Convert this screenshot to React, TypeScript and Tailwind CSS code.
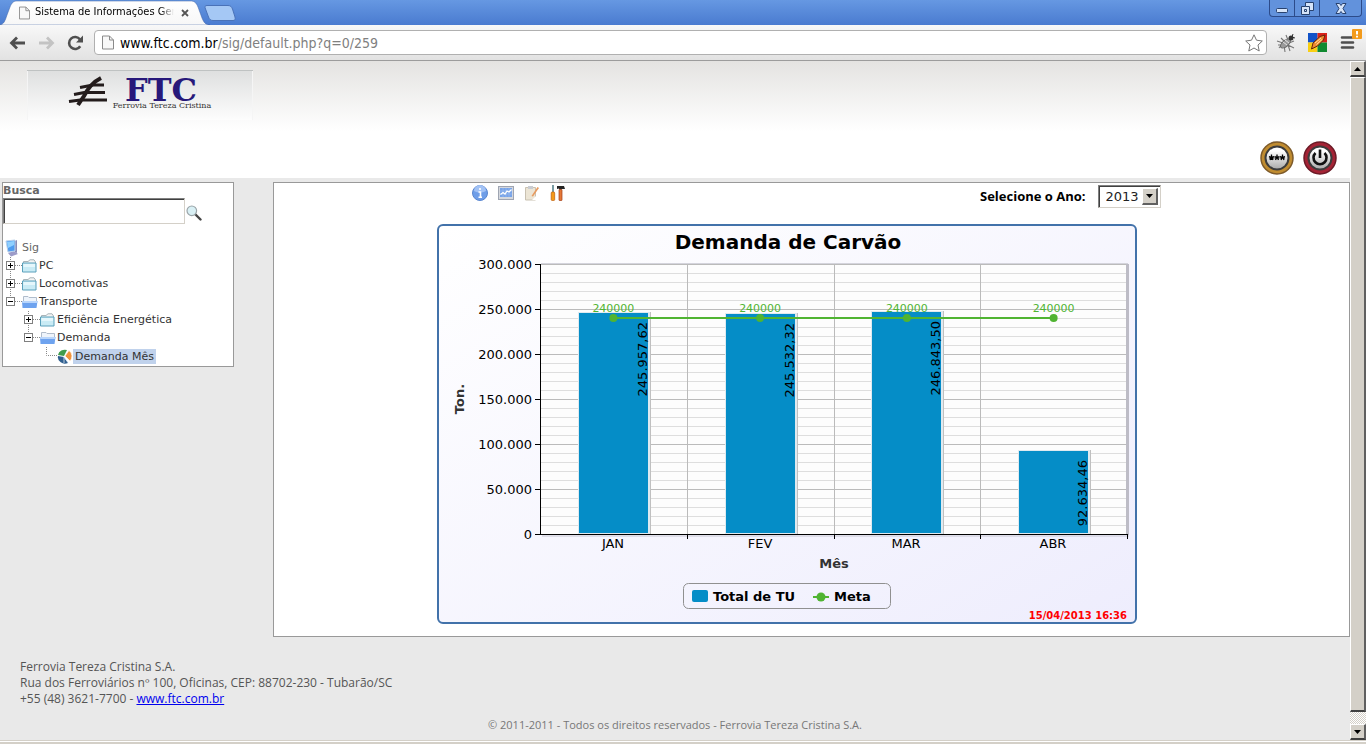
import React from "react";

const categories = [
  { name: "JAN", value: 245957.62, label: "245.957,62" },
  { name: "FEV", value: 245532.32, label: "245.532,32" },
  { name: "MAR", value: 246843.5, label: "246.843,50" },
  { name: "ABR", value: 92634.46, label: "92.634,46" },
];

const plot = { left: 103, right: 690, top: 40, bottom: 310, max: 300000 };
const yOf = (v: number) => plot.bottom - (v / plot.max) * (plot.bottom - plot.top);
const slot = (plot.right - plot.left) / categories.length;
const yTicks = [
  { value: 0, label: "0" },
  { value: 50000, label: "50.000" },
  { value: 100000, label: "100.000" },
  { value: 150000, label: "150.000" },
  { value: 200000, label: "200.000" },
  { value: 250000, label: "250.000" },
  { value: 300000, label: "300.000" },
];

function PageIcon({ className }: { className: string }) {
  return (
    <svg viewBox="0 0 12 14" className={className} aria-hidden="true">
      <path d="M.5 .5H7.5L11.5 4.5V13.5H.5Z" fill="#f8f8f8" stroke="#8a8a8a" />
      <path d="M7.5 .5V4.5H11.5" fill="none" stroke="#8a8a8a" />
    </svg>
  );
}

function TitleBar() {
  return (
    <div className="flex h-[25px] items-start bg-gradient-to-b from-[#6698e2] to-[#4a7bd0]">
      <div className="relative h-[25px] w-[210px] shrink-0">
        <svg viewBox="0 0 210 25" className="absolute inset-0 h-full w-full" aria-hidden="true">
          <defs>
            <linearGradient id="tab" x1="0" y1="0" x2="0" y2="1">
              <stop offset="0" stopColor="#ffffff" />
              <stop offset="1" stopColor="#f7f7f7" />
            </linearGradient>
          </defs>
          <path d="M0 25C4 24 5 21 7 15L10 7C12 2 14 1 17 1H190C194 1 196 2 198 7L202 18C204 23 206 25 210 25Z" fill="url(#tab)" stroke="#3d62a5" strokeOpacity=".5" />
        </svg>
        <div className="relative flex h-[25px] items-center pl-[19px]">
          <PageIcon className="h-[14px] w-[11px]" />
          <span className="ml-[5px] w-[139px] overflow-hidden whitespace-nowrap bg-gradient-to-r from-black from-90% to-transparent bg-clip-text font-['DejaVu_Sans_Condensed','DejaVu_Sans',sans-serif] text-[11px] text-transparent">
            Sistema de Informações Gere
          </span>
          <button aria-label="Fechar aba" className="ml-[7px]">
            <svg viewBox="0 0 8 8" className="size-2">
              <path d="M1 1L7 7M7 1L1 7" stroke="#555" strokeWidth="1.8" />
            </svg>
          </button>
        </div>
      </div>
      <button aria-label="Nova aba" className="-ml-[6px] mt-[5px]">
        <svg viewBox="0 0 32 16" className="h-4 w-8">
          <path d="M3 .5H24C27 .5 27.500 2 28.500 4L31 12C31.500 14.500 31 15.500 29 15.500H9C6 15.500 5.500 14 4.500 12L1.500 4C.5 1.500 1 .5 3 .5Z" fill="#a5c8f5" stroke="#4a72b8" />
        </svg>
      </button>
      <div className="ml-auto mr-1 flex h-[17px] rounded-b border border-t-0 border-[#2c4b8a] bg-[#6292dc]">
        <button aria-label="Minimizar" className="flex w-[25px] items-end justify-center border-r border-[#2c4b8a] pb-[3px]">
          <svg viewBox="0 0 12 5" className="h-[5px] w-3"><rect x=".5" y=".5" width="11" height="4" rx="1" fill="#d6e4f9" stroke="#28426f" /></svg>
        </button>
        <button aria-label="Restaurar" className="flex w-[25px] items-center justify-center border-r border-[#2c4b8a]">
          <svg viewBox="0 0 13 13" className="size-[13px]">
            <path d="M4.500 .5H12.500V8.500H8.500V12.500H.5V4.500H4.500Z" fill="#d6e4f9" stroke="#28426f" />
            <path d="M4.500 4.500H8.500V8.500M3.500 7.500H5.500V9.500H3.500Z" fill="none" stroke="#28426f" />
          </svg>
        </button>
        <button aria-label="Fechar" className="flex w-[41px] items-center justify-center">
          <svg viewBox="0 0 12 11" className="h-[11px] w-3">
            <path d="M1 .5H4.500L6 2.500L7.500 .5H11L8 5.500L11 10.500H7.500L6 8.500L4.500 10.500H1L4 5.500Z" fill="#d6e4f9" stroke="#28426f" />
          </svg>
        </button>
      </div>
    </div>
  );
}

function Toolbar() {
  return (
    <div className="flex h-9 items-center border-b border-[#9c9c9c] bg-gradient-to-b from-[#f8f8f8] to-[#e2e2e2] pl-[9px] pr-1">
      <button aria-label="Voltar">
        <svg viewBox="0 0 17 14" className="h-[14px] w-[17px]"><path d="M8 1.500L2.500 7L8 12.500M3 7H16" fill="none" stroke="#4f4f4f" strokeWidth="2.800" /></svg>
      </button>
      <button aria-label="Avançar" className="ml-3">
        <svg viewBox="0 0 17 14" className="h-[14px] w-[17px]"><path d="M9 1.500L14.500 7L9 12.500M14 7H1" fill="none" stroke="#c3c3c3" strokeWidth="2.800" /></svg>
      </button>
      <button aria-label="Recarregar" className="ml-3">
        <svg viewBox="0 0 17 16" className="h-4 w-[17px]">
          <path d="M13.200 11.200A6 6 0 1 1 13 4.500" fill="none" stroke="#4f4f4f" strokeWidth="2.600" />
          <path d="M16 .5V7.500H9Z" fill="#4f4f4f" />
        </svg>
      </button>
      <div className="ml-[10px] flex h-[25px] min-w-0 flex-1 items-center rounded-sm border border-[#b0b0b0] bg-white pl-[7px] pr-[3px]">
        <PageIcon className="h-[15px] w-3" />
        <div className="ml-[6px] flex-1 whitespace-nowrap font-['DejaVu_Sans_Condensed','DejaVu_Sans',sans-serif] text-sm text-[#808080]">
          <span className="text-black">www.ftc.com.br</span>/sig/default.php?q=0/259
        </div>
        <button aria-label="Favoritar">
          <svg viewBox="0 0 18 18" className="size-[18px]"><path d="M9 .8L11.500 6.200L17.300 7L13 11L14.200 17L9 14L3.800 17L5 11L.7 7L6.500 6.200Z" fill="#fff" stroke="#777" strokeLinejoin="round" /></svg>
        </button>
      </div>
      <button aria-label="Depurador" className="ml-[9px]">
        <svg viewBox="0 0 20 20" className="size-5">
          <path d="M1 8L7 10L3 15M5 5L9 9M10 2L12 7M18 8L13 10M18 15L12 12L14 18M8 12L9 19M2 12H7" fill="none" stroke="#777" strokeWidth="1.100" />
          <ellipse cx="9.500" cy="10.500" rx="6" ry="3" transform="rotate(-40 9.500 10.500)" fill="#9a9a9a" stroke="#666" />
          <path d="M7 9L11 12M9 7L13 10" stroke="#e4e4e4" />
          <circle cx="15" cy="5" r="2.500" fill="#333" />
          <path d="M17 1L16 4L19 5" fill="none" stroke="#333" />
        </svg>
      </button>
      <button aria-label="Acelerador" className="ml-3">
        <svg viewBox="0 0 19 19" className="size-[19px]">
          <path d="M0 0H9.500V9.500H0Z" fill="#1152c8" /><path d="M9.500 0H19V9.500H9.500Z" fill="#d9231b" />
          <path d="M0 9.500H9.500V19H0Z" fill="#f9cf13" /><path d="M9.500 9.500H19V19H9.500Z" fill="#108a31" />
          <path d="M3.500 16L5 10L12 3.500L17 2L15.500 7L9.500 13Z" fill="#ef8c30" stroke="#64220c" />
          <path d="M7 10L13 5M8.500 11.500L14 6.500" stroke="#ffe0a0" />
        </svg>
      </button>
      <button aria-label="Menu" className="ml-[13px] self-start pt-[4px]">
        <svg viewBox="0 0 22 20" className="h-5 w-[22px]">
          <path d="M2 8.500H13M2 13.500H13M2 18.500H13" stroke="#4f4f4f" strokeWidth="2.600" strokeLinecap="round" />
          <rect x="12" y="0" width="10" height="10" rx="1" fill="#f39b1c" />
          <path d="M17 2V5.500M17 6.800V8.500" stroke="#fff" strokeWidth="2" />
        </svg>
      </button>
    </div>
  );
}

function Logo() {
  return (
    <svg viewBox="0 0 226 50" className="h-[50px] w-[226px]" role="img" aria-label="FTC Ferrovia Tereza Cristina">
      <defs>
        <linearGradient id="logoBack" x1="0" y1="0" x2="0" y2="1">
          <stop offset="0" stopColor="#dedfdf" />
          <stop offset="1" stopColor="#fdfdfd" />
        </linearGradient>
      </defs>
      <rect width="226" height="50" fill="url(#logoBack)" />
      <path d="M0 .5H226" stroke="#bfc2c2" />
      <path d="M.5 1V50M225.500 1V50" stroke="#f5f5f5" />
      <path d="M74 8C64 13 60 20 57 26L51 35" fill="none" stroke="#231c1c" strokeWidth="4" />
      <path d="M64 15H77M53 17.500L66 15M58 22.500H78M47 24.500L60 22M56 30H80M42 31.500L57 29.500" fill="none" stroke="#231c1c" strokeWidth="3" />
      <text x="134" y="31" textAnchor="middle" fill="#27187a" className="font-['DejaVu_Serif',serif] text-[32px] font-bold">FTC</text>
      <text x="135" y="38" textAnchor="middle" fill="#333" className="font-['DejaVu_Serif',serif] text-[8px]">Ferrovia Tereza Cristina</text>
    </svg>
  );
}

function RoundButton({ label, outer, dark, children }: { label: string; outer: string; dark: string; children: React.ReactNode }) {
  return (
    <button aria-label={label}>
      <svg viewBox="0 0 34 34" className="size-[34px]">
        <defs>
          <linearGradient id="metal" x1="0" y1="0" x2="0" y2="1">
            <stop offset=".2" stopColor="#fff" />
            <stop offset="1" stopColor="#a8a8a8" />
          </linearGradient>
        </defs>
        <circle cx="17" cy="17" r="16" fill={outer} stroke={dark} strokeWidth="1.500" />
        <circle cx="17" cy="17" r="11.500" fill="url(#metal)" stroke="#3c3c3c" strokeWidth="2" />
        {children}
      </svg>
    </button>
  );
}

function Folder({ open }: { open?: boolean }) {
  return open ? (
    <svg viewBox="0 0 16 14" className="h-[14px] w-4" aria-hidden="true">
      <path d="M1.500 1.500H6L7 2.500H14.500V8H1.500Z" fill="#eef4fb" stroke="#b0bccb" />
      <path d="M0 6H15.500L14.500 13H.5Z" fill="#6ea3ef" />
      <path d="M0 6H15.500L15.200 8H.3Z" fill="#b8d5fb" />
    </svg>
  ) : (
    <svg viewBox="0 0 16 14" className="h-[14px] w-4" aria-hidden="true">
      <path d="M1.500 2.500H6L8 .8H12L13.500 3V6H1.500Z" fill="#f4f4f4" stroke="#a9b4b8" />
      <path d="M.5 4H14V13H.5Z" fill="#c9ebf5" stroke="#5aa0bb" />
      <path d="M1.500 5H13V8H1.500Z" fill="#e5f7fc" />
    </svg>
  );
}

function Toggle({ open, line }: { open?: boolean; line?: "full" | "top" }) {
  return (
    <svg viewBox="0 0 18 18" className="h-[18px] w-[18px] shrink-0" aria-hidden="true">
      <path d={line === "full" ? "M6.500 0V18M11 8.500H18" : "M6.500 0V8M11 8.500H18"} stroke="#888" strokeDasharray="1 1" />
      <rect x="2.500" y="4.500" width="8" height="8" fill="#fff" stroke="#808080" />
      <path d={open ? "M4 8.500H9" : "M4 8.500H9M6.500 6V11"} stroke="#000" />
    </svg>
  );
}

function Node({ depth, open, line, label }: { depth: 0 | 1; open?: boolean; line?: "full" | "top"; label: string }) {
  return (
    <li>
      <button className={depth === 0 ? "flex h-[18px] items-center pl-px" : "flex h-[18px] items-center pl-[19px]"} aria-expanded={!!open}>
        <Toggle open={open} line={line} />
        <Folder open={open} />
        <span className="pl-px">{label}</span>
      </button>
    </li>
  );
}

function Sidebar() {
  return (
    <aside className="w-[232px] shrink-0 border border-[#999] bg-white font-['DejaVu_Sans',Verdana,sans-serif] text-[11px] text-[#333]">
      <label htmlFor="busca" className="block h-[15px] font-bold leading-[15px] text-[#666]">Busca</label>
      <div className="flex items-center">
        <input id="busca" className="h-[26px] w-[182px] border border-b-[#d4d0c8] border-l-[#808080] border-r-[#d4d0c8] border-t-[#808080] bg-white px-1 shadow-[inset_1px_1px_0_#404040] outline-none" />
        <button aria-label="Buscar" className="pl-px pt-1">
          <svg viewBox="0 0 16 16" className="size-4">
            <path d="M9.500 9.500L14.500 14.500" stroke="#444" strokeWidth="2.400" strokeLinecap="round" />
            <circle cx="5.800" cy="5.800" r="4.800" fill="#d9f0f5" stroke="#9aa4a8" strokeWidth="1.200" />
          </svg>
        </button>
      </div>
      <div className="mt-[15px] flex h-[18px] items-center text-[#666]">
        <svg viewBox="0 0 18 18" className="size-[18px]" aria-hidden="true">
          <path d="M5 14L11 12L15 15L8 17.500Z" fill="#9c9bc8" />
          <path d="M12 2L14 1V14L12 13Z" fill="#8b8bb5" />
          <path d="M3 2L12 1V12L5 13Z" fill="#4f9cf0" stroke="#bcd2ea" />
          <path d="M4 3L11 2V6L5 9Z" fill="#8fd0ff" />
        </svg>
        <span className="pl-px">Sig</span>
      </div>
      <ul className="pb-px">
        <Node depth={0} line="full" label="PC" />
        <Node depth={0} line="full" label="Locomotivas" />
        <Node depth={0} open line="top" label="Transporte" />
        <Node depth={1} line="full" label="Eficiência Energética" />
        <Node depth={1} open line="top" label="Demanda" />
        <li>
          <a href="#demanda-mes" className="flex h-[18px] items-center pl-9">
            <svg viewBox="0 0 18 18" className="h-[18px] w-[18px]" aria-hidden="true">
              <path d="M7.500 0V8.500H18" fill="none" stroke="#888" strokeDasharray="1 1" />
            </svg>
            <svg viewBox="0 0 16 16" className="size-4" aria-hidden="true">
              <path d="M7 9L1 8A7 6.500 0 0 0 11 15Z" fill="#2f5f8f" />
              <path d="M7 8L1 7A7 6.500 0 0 1 10 2Z" fill="#3f9c4c" />
              <path d="M8 8L12 2.500A7 7 0 0 1 13 13Z" fill="#f0943c" stroke="#fff" strokeWidth=".6" />
              <path d="M7 9V15M7 9L11 14.500" stroke="#dfe9f2" strokeWidth=".8" />
            </svg>
            <span className="h-[15px] bg-[#c0d2ec] px-[2px] leading-[15px]">Demanda Mês</span>
          </a>
        </li>
      </ul>
    </aside>
  );
}

function Chart() {
  const minor = Array.from({ length: 31 }, (_, i) => i * 10000);
  return (
    <svg viewBox="0 0 700 400" className="h-[400px] w-[700px] font-['DejaVu_Sans',Verdana,sans-serif]" role="img" aria-label="Demanda de Carvão">
      <defs>
        <linearGradient id="card" x1="0" y1="0" x2="1" y2="1">
          <stop offset="0" stopColor="#ffffff" />
          <stop offset="1" stopColor="#eeedfd" />
        </linearGradient>
      </defs>
      <rect x="1" y="1" width="698" height="398" rx="5" fill="url(#card)" stroke="#4272aa" strokeWidth="2" />
      <text x="351" y="25" textAnchor="middle" className="text-xl font-bold">Demanda de Carvão</text>

      <rect x={plot.left} y={plot.top} width={plot.right - plot.left} height={plot.bottom - plot.top} fill="#fdfdfd" />
      {minor.map((v) => (
        <path key={v} d={`M${plot.left} ${yOf(v) + 0.5}H${plot.right}`} stroke={v % 50000 === 0 ? "#bbb" : "#dedede"} />
      ))}
      {[1, 2, 3].map((i) => (
        <path key={i} d={`M${Math.round(plot.left + i * slot) + 0.5} ${plot.top}V${plot.bottom}`} stroke="#bbb" />
      ))}
      <path d="M104 39.500H691" stroke="#d4d4dc" />
      <path d="M690.500 40V311" stroke="#bdbcc6" strokeWidth="3" />

      {categories.map((c, i) => {
        const x = Math.floor(plot.left + (i + 0.5) * slot - 34);
        const y = Math.ceil(yOf(c.value));
        return (
          <g key={c.name}>
            <rect x={x + 71} y={y - 1} width="1" height={plot.bottom - y + 1} fill="#c0c0c0" />
            <rect x={x - 1} y={y - 1} width="72" height={plot.bottom - y + 1} fill="#dfeaf0" />
            <rect x={x} y={y} width="69" height={plot.bottom - y - 1} fill="#058dc7" />
            <text transform={`translate(${x + 68} ${y + 9}) rotate(-90)`} textAnchor="end" className="text-[13px]">{c.label}</text>
            <text x={x + 34} y="324" textAnchor="middle" className="text-[13px]">{c.name}</text>
          </g>
        );
      })}

      <path d="M103.500 40V311M98 310.500H691" stroke="#000" />
      <path d="M105 312H692" stroke="#c8c8d4" />
      {[1, 2, 3, 4].map((i) => (
        <path key={i} d={`M${Math.round(plot.left + i * slot) + 0.5} 311V315`} stroke="#000" />
      ))}
      {yTicks.map((t) => (
        <g key={t.value}>
          <path d={`M98 ${yOf(t.value) + 0.5}H103`} stroke="#000" />
          <text x="95" y={yOf(t.value) + 5} textAnchor="end" className="text-[13px]">{t.label}</text>
        </g>
      ))}

      <path d={`M${plot.left + slot / 2} ${yOf(240000)}H${plot.right - slot / 2}`} stroke="#50b432" strokeWidth="2" />
      {categories.map((c, i) => (
        <g key={c.name} fill="#50b432">
          <circle cx={plot.left + (i + 0.5) * slot} cy={yOf(240000)} r="4" />
          <text x={plot.left + (i + 0.5) * slot} y="88" textAnchor="middle" className="text-[11px]">240000</text>
        </g>
      ))}

      <text transform="translate(27 175) rotate(-90)" textAnchor="middle" fill="#333" className="text-[13px] font-bold">Ton.</text>
      <text x="397" y="344" textAnchor="middle" fill="#333" className="text-[13px] font-bold">Mês</text>

      <rect x="246.500" y="359.500" width="207" height="25" rx="5" fill="none" stroke="#909090" />
      <rect x="255" y="366" width="16" height="12" rx="2" fill="#058dc7" />
      <text x="276" y="377" className="text-[13px] font-bold">Total de TU</text>
      <path d="M376 373H392" stroke="#50b432" strokeWidth="2" />
      <circle cx="384" cy="373" r="4.500" fill="#50b432" />
      <text x="397" y="377" className="text-[13px] font-bold">Meta</text>
      <text x="690" y="395" textAnchor="end" fill="#ff0000" className="text-[10px] font-bold">15/04/2013 16:36</text>
    </svg>
  );
}

function PanelTools() {
  return (
    <div className="flex gap-[10px]">
      <button aria-label="Informações">
        <svg viewBox="0 0 16 16" className="size-4">
          <circle cx="8" cy="8" r="7.500" fill="#6f9ee8" stroke="#5a87d0" />
          <path d="M2 6A6 6 0 0 1 14 6Q8 9 2 6Z" fill="#a2c2f5" />
          <path d="M8 3V5M6.500 7H8.500V12M6.500 12.200H10" stroke="#fff" strokeWidth="1.600" fill="none" />
        </svg>
      </button>
      <button aria-label="Gráfico">
        <svg viewBox="0 0 16 16" className="size-4">
          <rect x=".5" y="1.500" width="15" height="13" fill="#d5d8de" stroke="#9fa5b2" />
          <rect x="2" y="3" width="12" height="9" fill="#78a4e8" />
          <path d="M2 6H14M2 9H14M5 3V12M8 3V12M11 3V12" stroke="#9dbdf0" strokeWidth=".6" />
          <path d="M2.500 9.500L5 7.500L7 9L9 6L11 7L13.500 4.500" fill="none" stroke="#fff" strokeWidth="1.300" />
        </svg>
      </button>
      <button aria-label="Editar">
        <svg viewBox="0 0 16 16" className="size-4">
          <path d="M1.500 2.500H11.500V15H1.500Z" fill="#ece5d5" stroke="#c9c1b1" />
          <path d="M4 1H9V4H4Z" fill="#c9ccd2" />
          <path d="M7.500 11L13.500 2L15 3L9 11.500Z" fill="#e79a5f" />
          <path d="M8 15L12 11V15Z" fill="#fff" />
        </svg>
      </button>
      <button aria-label="Ferramentas">
        <svg viewBox="0 0 16 16" className="size-4">
          <path d="M3 0V7" stroke="#6b9199" strokeWidth="1.800" />
          <rect x="1.200" y="7" width="3.500" height="8.500" rx="1" fill="#f49a18" stroke="#bb5a09" strokeWidth=".7" />
          <path d="M7 1H14L15 4H12V4.500H9V3.500L7 4Z" fill="#242424" />
          <rect x="9" y="4.500" width="3" height="11" rx=".5" fill="#e57838" stroke="#a03c15" strokeWidth=".7" />
        </svg>
      </button>
    </div>
  );
}

function ChartPanel() {
  return (
    <main className="ml-[39px] min-w-[780px] flex-1 border border-[#999] bg-white pb-3 pr-[50px]">
      <div className="mx-auto flex w-[700px] flex-col">
        <div className="-mr-[24px] ml-[35px] flex h-[41px] items-start justify-between pt-[2px]">
          <PanelTools />
          <div className="flex items-center gap-3">
            <label htmlFor="ano" className="font-['Open_Sans',sans-serif] text-[13px] font-bold text-black">Selecione o Ano:</label>
            <span className="relative flex">
              <select id="ano" defaultValue="2013" className="h-[23px] w-[63px] appearance-none border border-b-[#d4d0c8] border-l-[#808080] border-r-[#d4d0c8] border-t-[#808080] bg-white pl-[7px] font-['DejaVu_Sans',Verdana,sans-serif] text-[13px] leading-[18px] text-[#222] shadow-[inset_1px_1px_0_#404040]">
                <option>2013</option>
              </select>
              <span className="pointer-events-none absolute right-[3px] top-[3px] flex h-[17px] w-4 items-center justify-center border border-b-2 border-r-2 border-b-[#606060] border-l-white border-r-[#606060] border-t-white bg-[#d4d0c8]">
                <svg viewBox="0 0 7 4" className="h-1 w-[7px]"><path d="M0 0H7L3.500 4Z" /></svg>
              </span>
            </span>
          </div>
        </div>
        <Chart />
      </div>
    </main>
  );
}

function ScrollBar() {
  return (
    <div className="flex w-4 shrink-0 flex-col bg-[repeating-conic-gradient(#d4d0c8_0_25%,#ffffff_0_50%)] bg-[length:2px_2px]">
      <button aria-label="Rolar para cima" className="flex h-4 items-center justify-center border border-b-2 border-r-2 border-b-[#404040] border-l-white border-r-[#606060] border-t-white bg-[#d4d0c8]">
        <svg viewBox="0 0 7 4" className="h-1 w-[7px]"><path d="M0 4H7L3.500 0Z" /></svg>
      </button>
      <div className="mb-3 flex-1 border border-b-2 border-r-2 border-b-[#404040] border-l-white border-r-[#606060] border-t-white bg-[#d4d0c8]" />
      <button aria-label="Rolar para baixo" className="flex h-4 items-center justify-center border border-b-2 border-r-2 border-b-[#404040] border-l-white border-r-[#606060] border-t-white bg-[#d4d0c8]">
        <svg viewBox="0 0 7 4" className="h-1 w-[7px]"><path d="M0 0H7L3.500 4Z" /></svg>
      </button>
    </div>
  );
}

export default function App() {
  return (
    <div className="flex min-h-screen flex-col bg-[#e9e9e9]">
      <TitleBar />
      <Toolbar />
      <div className="flex flex-1">
        <div className="flex min-w-0 flex-1 flex-col">
          <header className="flex items-start justify-between bg-gradient-to-b from-[#e4e3e1] to-white to-60% pb-[3px] pl-[27px] pr-[13px] pt-[9px]">
            <Logo />
            <div className="flex gap-[9px] pt-[71px]">
              <RoundButton label="Alterar senha" outer="#c08c30" dark="#7d5a2a">
                <path d="M11.500 13.500V19M9 15.500L14 17M14 15.500L9 17M10 19L11.500 16L13 19M17 13.500V16.500M14.500 15.500L19.500 17M19.500 15.500L14.500 17M15.500 19L17 16L18.500 19M22.500 13.500V16.500M20 15.500L25 17M25 15.500L20 17M21 19L22.500 16L24 19" fill="none" stroke="#000" strokeWidth="1.300" />
              </RoundButton>
              <RoundButton label="Sair" outer="#a42335" dark="#6b1a26">
                <path d="M12.500 12A6.500 6.500 0 1 0 21.500 12" fill="none" stroke="#111" strokeWidth="2.600" />
                <path d="M17 8.500V17" stroke="#111" strokeWidth="2.600" />
              </RoundButton>
            </div>
          </header>
          <div className="flex items-start pl-[2px] pt-1">
            <Sidebar />
            <ChartPanel />
          </div>
          <footer className="px-5 pt-[22px] font-['Open_Sans',sans-serif]">
            <address className="text-xs not-italic leading-4 text-[#555]">
              Ferrovia Tereza Cristina S.A.
              <br />
              Rua dos Ferroviários nº 100, Oficinas, CEP: 88702-230 - Tubarão/SC
              <br />
              +55 (48) 3621-7700 - <a href="http://www.ftc.com.br" className="text-[#0000ee] underline">www.ftc.com.br</a>
            </address>
            <p className="pt-[10px] text-center text-[11px] leading-4 text-[#777]">© 2011-2011 - Todos os direitos reservados - Ferrovia Tereza Cristina S.A.</p>
          </footer>
        </div>
        <ScrollBar />
      </div>
      <div className="h-1 border-t border-[#d4d0c8] bg-[#d4d0c8] shadow-[inset_0_1px_0_#ffffff]" />
    </div>
  );
}
